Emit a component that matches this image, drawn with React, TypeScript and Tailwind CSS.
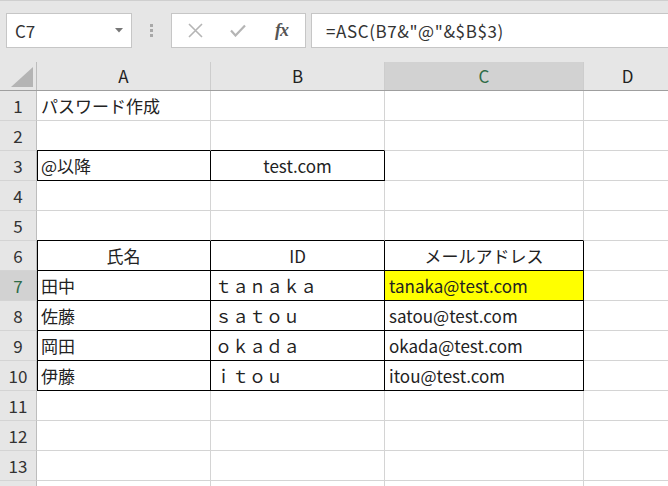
import React from 'react';

type Cell = {
  text?: string;
  align?: 'left' | 'center';
  bg?: string;
  right?: boolean; // black right edge
  bottom?: boolean; // black bottom edge
  left?: boolean; // black left edge
};

const COLS = ['A', 'B', 'C', 'D'];

// sheet content, rows 1..14
const sheet: Record<number, Cell[]> = {
  1: [{ text: 'パスワード作成' }, {}, {}, {}],
  2: [{ bottom: true }, { bottom: true }, {}, {}],
  3: [
    { text: '@以降', right: true, bottom: true, left: true },
    { text: 'test.com', align: 'center', right: true, bottom: true },
    {},
    {},
  ],
  5: [{ bottom: true }, { bottom: true }, { bottom: true }, {}],
  6: [
    { text: '氏名', align: 'center', right: true, bottom: true, left: true },
    { text: 'ID', align: 'center', right: true, bottom: true },
    { text: 'メールアドレス', align: 'center', right: true, bottom: true },
    {},
  ],
  7: [
    { text: '田中', right: true, bottom: true, left: true },
    { text: 'ｔａｎａｋａ', right: true, bottom: true },
    { text: 'tanaka@test.com', right: true, bottom: true, bg: 'yellow' },
    {},
  ],
  8: [
    { text: '佐藤', right: true, bottom: true, left: true },
    { text: 'ｓａｔｏｕ', right: true, bottom: true },
    { text: 'satou@test.com', right: true, bottom: true },
    {},
  ],
  9: [
    { text: '岡田', right: true, bottom: true, left: true },
    { text: 'ｏｋａｄａ', right: true, bottom: true },
    { text: 'okada@test.com', right: true, bottom: true },
    {},
  ],
  10: [
    { text: '伊藤', right: true, bottom: true, left: true },
    { text: 'ｉｔｏｕ', right: true, bottom: true },
    { text: 'itou@test.com', right: true, bottom: true },
    {},
  ],
};

// row 14 is only a sliver at the bottom edge, its number is not visible
const rows = Array.from({ length: 14 }, (_, i) => i + 1);
const font = { fontFamily: '"Noto Sans CJK JP", "Noto Sans", sans-serif' };

const SheetCell: React.FC<{ cell: Cell }> = ({ cell }) => (
  <div
    className={`h-[30px] flex items-center px-[4px] border-r border-b text-[17px] text-[#222] whitespace-nowrap overflow-visible
      ${cell.right ? 'border-r-black' : 'border-r-[#d4d4d4]'}
      ${cell.bottom ? 'border-b-black' : 'border-b-[#d4d4d4]'}
      ${cell.left ? 'shadow-[inset_1px_0_0_#000]' : ''}
      ${cell.bg === 'yellow' ? 'bg-[#ffff00]' : 'bg-white'}
      ${cell.align === 'center' ? 'justify-center' : 'justify-start'}`}
  >
    {cell.text}
  </div>
);

export default function App() {
  return (
    <div className="w-[668px] h-[486px] overflow-hidden bg-white select-none" style={font}>
      {/* formula bar */}
      <div className="h-[62px] bg-[#e6e6e6] border-t border-[#cfcfcf] flex items-center pl-[6px] pb-[2px]">
        <div className="w-[126px] h-[35px] bg-white border border-[#c6c6c6] flex items-center justify-between pl-[8px] pr-[8px]">
          <span className="text-[17px] text-[#333]">C7</span>
          <svg width="8" height="5" viewBox="0 0 8 5"><polygon points="0,0 8,0 4,4.5" fill="#777" /></svg>
        </div>
        <div className="w-[39px] flex flex-col items-center gap-[2px]">
          <span className="w-[3px] h-[3px] bg-[#a8a8a8]" />
          <span className="w-[3px] h-[3px] bg-[#a8a8a8]" />
          <span className="w-[3px] h-[3px] bg-[#a8a8a8]" />
        </div>
        <div className="w-[135px] h-[35px] bg-white border border-[#c6c6c6] flex items-center">
          <div className="w-[44px] flex justify-center pl-[2px]">
            <svg width="15" height="15" viewBox="0 0 15 15"><path d="M1 1 L14 14 M14 1 L1 14" stroke="#b5b5b5" strokeWidth="1.6" /></svg>
          </div>
          <div className="w-[44px] flex justify-center">
            <svg width="16" height="13" viewBox="0 0 16 13"><path d="M1 6.5 L5.5 11.5 L15 1.5" stroke="#b5b5b5" strokeWidth="2.2" fill="none" /></svg>
          </div>
          <div className="flex-1 flex justify-center pr-[2px]">
            <span className="text-[18px] italic font-bold text-[#555] tracking-[-1px]" style={{ fontFamily: '"Liberation Serif", serif' }}>fx</span>
          </div>
        </div>
        <div className="flex-1 ml-[5px] h-[35px] bg-white border border-r-0 border-[#c6c6c6] flex items-center pl-[14px]">
          <span className="text-[17px] text-[#333] whitespace-nowrap tracking-[0.6px]">=ASC(B7&amp;"@"&amp;$B$3)</span>
        </div>
      </div>

      {/* column headers */}
      <div className="grid grid-cols-[37px_174px_174px_199px_88px] h-[29px] bg-[#e6e6e6] border-b border-[#9f9f9f]">
        <div className="border-r border-[#bdbdbd] flex items-end justify-end pr-[3px] pb-[3px]">
          <svg width="22" height="20" viewBox="0 0 22 20"><polygon points="22,0 22,20 0,20" fill="#b4b4b4" /></svg>
        </div>
        {COLS.map(c => (
          <div
            key={c}
            className={`border-r border-[#cdcdcd] flex items-center justify-center text-[17px] ${c === 'C' ? 'bg-[#d2d2d2] text-[#2f6b47]' : 'text-[#222]'}`}
          >
            {c}
          </div>
        ))}
      </div>

      {/* rows */}
      {rows.map(r => {
        const cells = sheet[r] ?? [{}, {}, {}, {}];
        const sel = r === 7;
        return (
          <div key={r} className="grid grid-cols-[37px_174px_174px_199px_88px]">
            <div
              className={`h-[30px] border-r border-b border-r-[#bdbdbd] border-b-[#d4d4d4] flex items-center justify-center text-[17px] ${sel ? 'bg-[#d2d2d2] text-[#2f6b47]' : 'bg-[#e6e6e6] text-[#333]'}`}
            >
              {r < 14 ? r : null}
            </div>
            {cells.map((cell, i) => (
              <SheetCell key={i} cell={cell} />
            ))}
          </div>
        );
      })}
    </div>
  );
}
